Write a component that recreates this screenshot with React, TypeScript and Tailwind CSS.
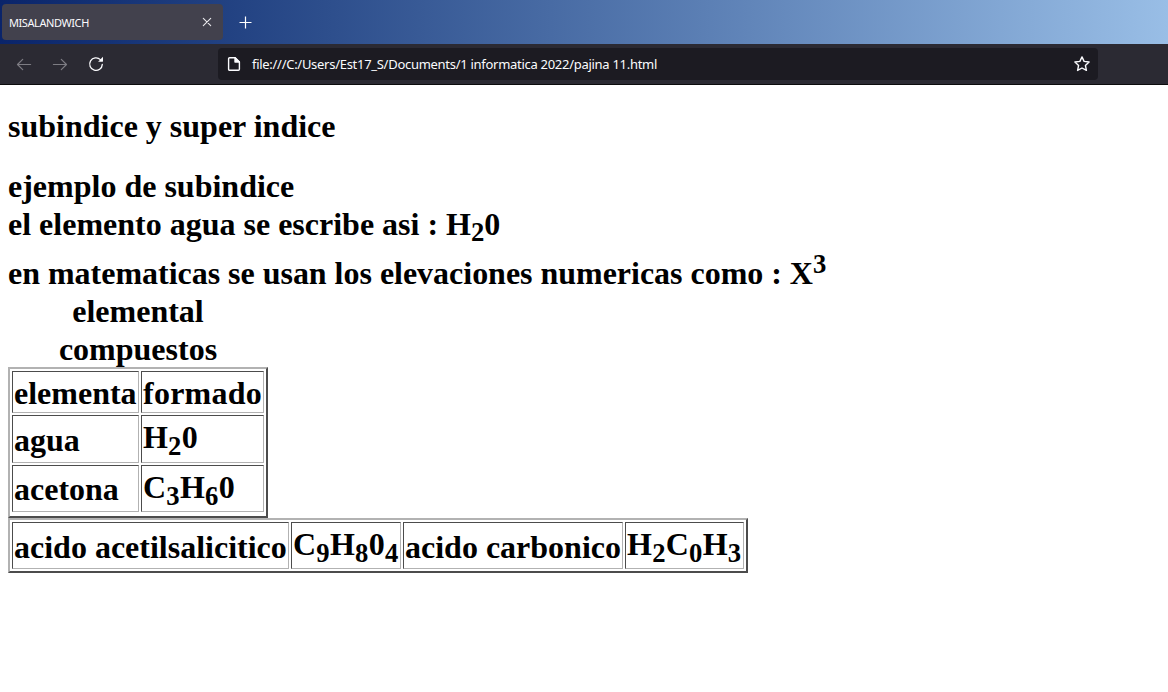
import type { ReactNode } from 'react';

function Sub({ children }: { children: ReactNode }) {
  return <span className="align-[-7px] text-[26.67px] leading-[0]">{children}</span>;
}

function Cell({ children, className = '' }: { children: ReactNode; className?: string }) {
  return (
    <div
      className={`overflow-hidden whitespace-nowrap border border-t-[#4c4c4c] border-l-[#4c4c4c] border-r-[#b2b2b2] border-b-[#b2b2b2] pl-px leading-[38px] ${className}`}
    >
      {children}
    </div>
  );
}

const tableFrame =
  'grid gap-[2px] border-2 border-t-[#b2b2b2] border-l-[#b2b2b2] border-r-[#4c4c4c] border-b-[#4c4c4c] p-[2px]';

function TabBar() {
  return (
    <div className="flex h-11 items-center bg-linear-to-r from-[#0a246a] to-[#99bee6] pl-[2px]">
      <div className="flex h-9 w-[221px] items-center justify-between rounded bg-[#42414d] pr-[11px] pl-[7px] text-[11px] text-[#fbfbfe]">
        <span className="pt-[2px] tracking-[-0.42px]">MISALANDWICH</span>
        <svg width="10" height="10" viewBox="0 0 10 10" stroke="#e8e8ec" strokeWidth="1.1" strokeLinecap="round">
          <path d="M1.3 1.3l7.4 7.4M8.7 1.3L1.3 8.7" />
        </svg>
      </div>
      <svg className="mt-px ml-4" width="13" height="13" viewBox="0 0 13 13" stroke="#fff" strokeWidth="1.2">
        <path d="M6.5 .5v12M.5 6.5h12" />
      </svg>
    </div>
  );
}

function NavBar() {
  return (
    <div className="flex h-[41px] items-center border-b border-[#0c0c0d] bg-[#2b2a33]">
      <svg className="ml-4" width="16" height="16" viewBox="0 0 16 16" fill="none" stroke="#7d7c83" strokeWidth="1.2" strokeLinecap="round" strokeLinejoin="round">
        <path d="M14.6 8.5H1.6M6.7 3.3L1.5 8.5l5.2 5.2" />
      </svg>
      <svg className="ml-5" width="16" height="16" viewBox="0 0 16 16" fill="none" stroke="#7d7c83" strokeWidth="1.2" strokeLinecap="round" strokeLinejoin="round">
        <path d="M1.4 8.5h13M9.3 3.3l5.2 5.2l-5.2 5.2" />
      </svg>
      <svg className="ml-5" width="16" height="16" viewBox="0 0 16 16" fill="none" stroke="#fbfbfe" strokeWidth="1.3" strokeLinecap="round">
        <path d="M14.3 8.4A6.3 6.3 0 1 1 12.4 3.6" />
        <path d="M15 .8v4.5a.4.4 0 0 1-.4.4h-4.5z" fill="#fbfbfe" stroke="none" />
      </svg>
      <div className="ml-[114px] flex h-8 w-[880px] items-center rounded bg-[#1c1b22] pr-2 pl-2 text-[13px] text-[#fbfbfe]">
        <svg width="16" height="16" viewBox="0 0 16 16" fill="none" stroke="#fbfbfe" strokeWidth="1.4" strokeLinejoin="round">
          <path d="M3.6 1.7h5.6l4.2 4.2v7.4a1 1 0 0 1-1 1H3.6a1 1 0 0 1-1-1V2.7a1 1 0 0 1 1-1z" />
          <path d="M9 1.7V6h4.3z" fill="#fbfbfe" />
        </svg>
        <span className="ml-[10px] pt-[2px] tracking-[-0.285px] whitespace-nowrap">
          file:///C:/Users/Est17_S/Documents/1 informatica 2022/pajina 11.html
        </span>
        <svg className="ml-auto" width="16" height="16" viewBox="0 0 16 16" fill="none" stroke="#fbfbfe" strokeWidth="1.4" strokeLinejoin="round">
          <path d="M8 .9l2.1 4.5 5 .6-3.7 3.4 1 5L8 12l-4.4 2.4 1-5L.9 6l5-.6z" />
        </svg>
      </div>
    </div>
  );
}

export default function App() {
  return (
    <div className="h-[692px] w-[1168px] overflow-hidden bg-white">
      <header className="font-['Noto_Sans',sans-serif]">
        <TabBar />
        <NavBar />
      </header>
      <main className="px-2 pt-[22px] font-['Liberation_Serif',serif] text-[32px] leading-[38px] font-bold text-black">
        <h1 className="h-[38px]">subindice y super indice</h1>
        <p className="mt-[22px] h-[38px]">ejemplo de subindice</p>
        <p className="h-[38px]">
          el elemento agua se escribe asi : H<span className="align-[-6px] text-[26.67px] leading-[0]">2</span>0
        </p>
        <p className="mt-[11px] h-[38px] tracking-[-0.02px]">
          en matematicas se usan los elevaciones numericas como : X
          <span className="align-[11px] text-[26.67px] leading-[0]">3</span>
        </p>
        <div className="h-[75px] w-[260px] text-center">
          elemental
          <br />
          compuestos
        </div>
        <div className={`${tableFrame} h-[151px] w-[260px] grid-cols-[127px_123px] grid-rows-[42px_48px_47px]`}>
          <Cell className="pt-[2px]">elementa</Cell>
          <Cell className="pt-[2px] tracking-[0.25px]">formado</Cell>
          <Cell className="pt-[5px]">agua</Cell>
          <Cell className="pt-[2px] tracking-[0.2px]">
            H<Sub>2</Sub>0
          </Cell>
          <Cell className="pt-[4px]">acetona</Cell>
          <Cell className="pt-[2px] tracking-[0.25px]">
            C<Sub>3</Sub>H<Sub>6</Sub>0
          </Cell>
        </div>
        <div className={`${tableFrame} h-[55px] w-[740px] grid-cols-[277px_110px_220px_119px] grid-rows-[47px]`}>
          <Cell className="pt-[5px]">acido acetilsalicitico</Cell>
          <Cell className="pt-[2px] tracking-[0.25px]">
            C<Sub>9</Sub>H<Sub>8</Sub>0<Sub>4</Sub>
          </Cell>
          <Cell className="pt-[5px]">acido carbonico</Cell>
          <Cell className="pt-[2px] tracking-[0.25px]">
            H<Sub>2</Sub>C<Sub>0</Sub>H<Sub>3</Sub>
          </Cell>
        </div>
      </main>
    </div>
  );
}
